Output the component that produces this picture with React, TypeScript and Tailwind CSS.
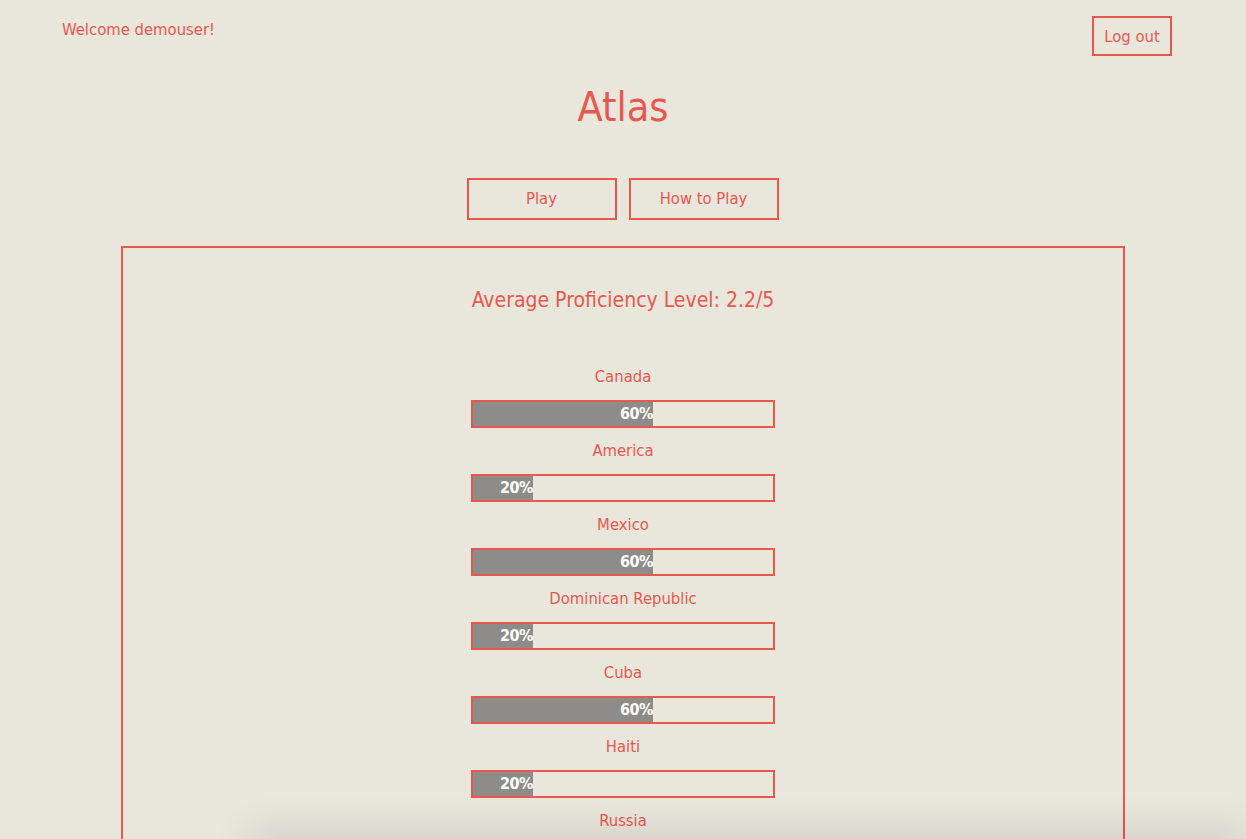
import React from 'react';

const font = "font-['DejaVu_Sans_Condensed','Liberation_Sans_Narrow','Roboto',sans-serif]";

const countries = [
  { name: 'Canada', pct: 60 },
  { name: 'America', pct: 20 },
  { name: 'Mexico', pct: 60 },
  { name: 'Dominican Republic', pct: 20 },
  { name: 'Cuba', pct: 60 },
  { name: 'Haiti', pct: 20 },
  { name: 'Russia', pct: 40 },
  { name: 'China', pct: 20 },
];

const ProgressRow = ({ name, pct }: { name: string; pct: number }) => (
  <div className="flex flex-col items-center">
    <div className="h-6 leading-6 text-[16.5px] text-[#e8584f] mb-[11px]">{name}</div>
    <div className="w-[304px] h-7 border-2 border-[#e8584f] mb-[11px]">
      <div
        className="h-full bg-[#8e8c88] flex items-center justify-end text-white text-[16px] leading-none font-bold"
        style={{ width: `${pct}%` }}
      >
        <span className="tracking-[-0.5px]">{pct}%</span>
      </div>
    </div>
  </div>
);

export default function App() {
  return (
    <div className={`min-h-screen bg-[#e9e6dc] ${font} overflow-hidden`}>
      <header className="flex justify-between items-start pl-[62px] pr-[74px] pt-4">
        <div className="text-[16.5px] text-[#e8584f] leading-6 mt-[2px]">Welcome demouser!</div>
        <button className="w-[80px] h-[40px] border-2 border-[#e8584f] text-[16.5px] text-[#e8584f] pt-[2px]">
          Log out
        </button>
      </header>

      <h1 className="text-center text-[41px] leading-none text-[#e8584f] mt-[31px]">Atlas</h1>

      <div className="flex justify-center gap-3 mt-[50px] ml-[-1px]">
        <button className="w-[150px] h-[42px] border-2 border-[#e8584f] text-[16.5px] text-[#e8584f]">Play</button>
        <button className="w-[150px] h-[42px] border-2 border-[#e8584f] text-[16.5px] text-[#e8584f]">How to Play</button>
      </div>

      <section className="w-[1004px] mx-auto mt-[26px] border-2 border-[#e8584f] pt-[37px] pb-10">
        <h2 className="text-center text-[21px] leading-[30px] text-[#e8584f] mb-[50px]">
          Average Proficiency Level: 2.2/5
        </h2>
        {countries.map((c) => (
          <ProgressRow key={c.name} name={c.name} pct={c.pct} />
        ))}
      </section>

      <div className="fixed left-[250px] right-0 top-full h-10 shadow-[0_-6px_40px_rgba(0,0,0,0.12)]" />
    </div>
  );
}
